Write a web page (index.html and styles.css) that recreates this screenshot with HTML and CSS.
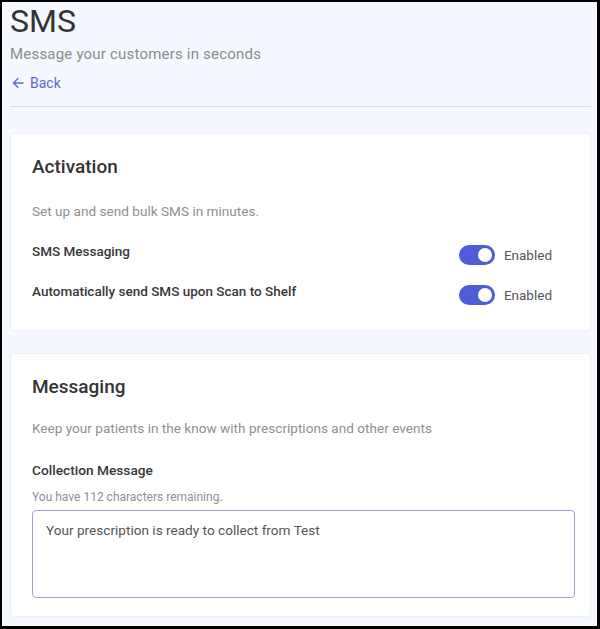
FILE: index.html
```html
<!DOCTYPE html>
<html lang="en">
<head>
<meta charset="utf-8">
<title>SMS</title>
<link rel="stylesheet" href="styles.css">
</head>
<body>
<div class="page">
  <header class="header">
    <h1 class="title">SMS</h1>
    <p class="subtitle">Message your customers in seconds</p>
    <a class="back" href="#">
      <svg class="back-icon" width="12" height="12" viewBox="0 0 12 12" aria-hidden="true">
        <path d="M11 6H1.5M6 1.5L1.5 6L6 10.5" fill="none" stroke="currentColor" stroke-width="1.3" stroke-linecap="round" stroke-linejoin="round"/>
      </svg>
      <span>Back</span>
    </a>
  </header>
  <div class="divider"></div>

  <section class="card card-activation">
    <h2 class="card-title">Activation</h2>
    <p class="card-desc">Set up and send bulk SMS in minutes.</p>
    <div class="setting-row">
      <span class="setting-label">SMS Messaging</span>
      <span class="toggle-group">
        <span class="toggle"><span class="knob"></span></span>
        <span class="toggle-text">Enabled</span>
      </span>
    </div>
    <div class="setting-row">
      <span class="setting-label">Automatically send SMS upon Scan to Shelf</span>
      <span class="toggle-group">
        <span class="toggle"><span class="knob"></span></span>
        <span class="toggle-text">Enabled</span>
      </span>
    </div>
  </section>

  <section class="card card-messaging">
    <h2 class="card-title">Messaging</h2>
    <p class="card-desc desc-messaging">Keep your patients in the know with prescriptions and other events</p>
    <label class="field-label" for="collection">Collection Message</label>
    <p class="field-hint">You have 112 characters remaining.</p>
    <textarea id="collection" class="field-textarea">Your prescription is ready to collect from Test</textarea>
  </section>
</div>
</body>
</html>
```

FILE: styles.css
```css
* { box-sizing: border-box; }

html, body {
  margin: 0;
  padding: 0;
  background: #000;
}

body {
  font-family: Roboto, "Noto Sans", Arial, sans-serif;
  color: #333;
}

.page {
  width: 600px;
  height: 629px;
  border-style: solid;
  border-color: #000;
  border-width: 2px 3px 3px 2px;
  background: #f5f8fe;
  padding: 0 6px 0 8px;
  overflow: hidden;
}

.header {
  padding-top: 1px;
}

.title {
  margin: 0;
  font-size: 32px;
  line-height: 36px;
  font-weight: 400;
  color: #333;
}

.subtitle {
  margin: 5px 0 0;
  font-size: 15px;
  line-height: 20px;
  letter-spacing: 0.2px;
  color: #8c8c8c;
}

.back {
  margin-top: 9px;
  display: inline-flex;
  align-items: center;
  gap: 6px;
  font-size: 14px;
  line-height: 20px;
  color: #5b68d6;
  text-decoration: none;
  padding-left: 2px;
}

.back-icon {
  display: block;
}

.divider {
  margin-top: 13px;
  height: 1px;
  background: #d9dce6;
}

.card {
  margin-top: 26px;
  background: #fff;
  border: 1px solid #edf0f6;
  border-radius: 4px;
  padding: 21px 15px 25px 21px;
}

.card-messaging {
  margin-top: 22px;
  padding-bottom: 18px;
}

.card-title {
  margin: 0;
  font-size: 19px;
  line-height: 24px;
  font-weight: 500;
  color: #333;
}

.card-desc {
  margin: 23px 0 0;
  font-size: 13.6px;
  line-height: 18px;
  color: #8f8f8f;
}

.desc-messaging {
  margin-top: 20px;
}

.setting-row {
  display: flex;
  justify-content: space-between;
  align-items: flex-start;
  margin-top: 22px;
}

.setting-row + .setting-row {
  margin-top: 17px;
}

.setting-label {
  font-size: 13.5px;
  line-height: 18px;
  font-weight: 500;
  color: #383838;
}

.toggle-group {
  display: flex;
  align-items: center;
  gap: 9px;
  margin-top: 3px;
  margin-right: 23px;
}

.toggle {
  width: 36px;
  height: 20px;
  border-radius: 10px;
  background: #4f5bd8;
  display: flex;
  align-items: center;
  justify-content: flex-end;
  padding-right: 3px;
}

.knob {
  width: 14px;
  height: 14px;
  border-radius: 50%;
  background: #fff;
}

.toggle-text {
  font-size: 13.5px;
  line-height: 20px;
  color: #555;
}

.field-label {
  display: block;
  margin-top: 23px;
  font-size: 13.7px;
  line-height: 20px;
  font-weight: 500;
  color: #383838;
}

.field-hint {
  margin: 9px 0 0;
  font-size: 12px;
  line-height: 16px;
  color: #8f8f8f;
}

.field-textarea {
  display: block;
  margin-top: 5px;
  width: 100%;
  height: 88px;
  border: 1px solid #9ca3d6;
  border-radius: 4px;
  padding: 9px 13px;
  font-family: Roboto, "Noto Sans", Arial, sans-serif;
  font-size: 13.6px;
  line-height: 20px;
  color: #555;
  resize: none;
  background: #fff;
}
```
